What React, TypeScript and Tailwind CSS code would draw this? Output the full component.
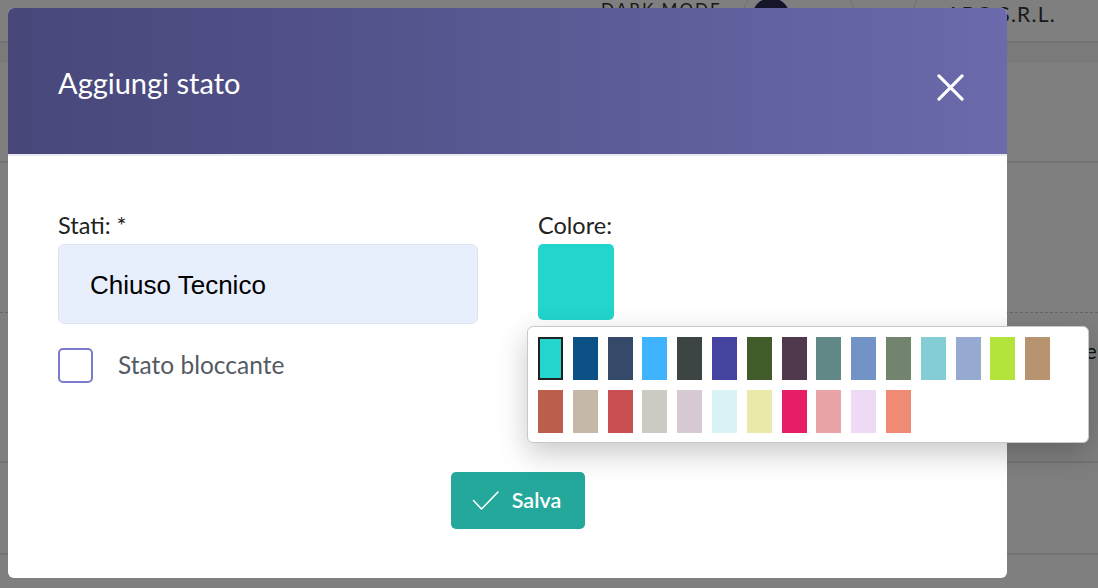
import React from "react";

const row1 = [
  "#23d5cd", "#0b5185", "#354969", "#40b3fe", "#3d4444", "#4444a0", "#415b2b", "#50394c",
  "#618786", "#7193c6", "#72846d", "#84cdd5", "#95a9d1", "#b3e43b", "#b7936f",
];
const row2 = [
  "#bb5e4b", "#c5b8a8", "#c84f52", "#cbcbc4", "#d7cad4", "#daf3f5", "#e8e9ab", "#e71d67",
  "#eaa3a7", "#eedaf4", "#ef8a75",
];

function CheckIcon() {
  return (
    <svg width="27" height="19" viewBox="0 0 27 19" fill="none" aria-hidden="true">
      <path d="M1.5 9.5 L9.5 18 L26 1" stroke="#fff" strokeWidth="1.6" strokeLinecap="round" strokeLinejoin="round" />
    </svg>
  );
}

function CloseIcon() {
  return (
    <svg width="27" height="27" viewBox="0 0 28 28" fill="none" aria-hidden="true">
      <path d="M2 2 L26 26 M26 2 L2 26" stroke="#fff" strokeWidth="3.2" strokeLinecap="round" />
    </svg>
  );
}

function Swatch({ color, selected }: { color: string; selected?: boolean }) {
  return (
    <div
      className={selected ? "w-[25px] h-[43px] border-2 border-[#222]" : "w-[25px] h-[43px]"}
      style={{ background: color }}
    />
  );
}

export default function App() {
  const font = { fontFamily: "Lato, 'Noto Sans', sans-serif" };

  return (
    <div className="relative w-[1098px] h-[588px] overflow-hidden bg-white" style={font}>
      {/* ── page behind the modal ── */}
      <div className="flex items-start h-[43px] border-b-2 border-[#e6e6ee] text-[#333]">
        <div className="w-[601px] shrink-0" />
        <span className="w-[141px] shrink-0 text-[17px] leading-[18px] tracking-[0.12em] mt-[1px]">DARK MODE</span>
        <div className="w-[114px] shrink-0 h-[62px] -mt-[14px] rounded-full border border-[#ddd] flex items-center pl-[9px] gap-[14px]">
          <div className="w-[38px] h-[38px] rounded-full bg-[#2a2a55]" />
          <span className="text-[17px] tracking-[0.12em]">OFF</span>
        </div>
        <div className="ml-[57px] h-[70px] -mt-[20px] pl-[32px] rounded-l-full border-l border-[#ddd] flex items-start">
          <span className="mt-[23px] text-[21px] leading-[22px] tracking-[0.06em]">ABC S.R.L.</span>
        </div>
      </div>
      <div className="h-[20px] bg-[#f4f4f6]" />
      <div className="h-[100px] border-b-2 border-[#e6e6ee]" />
      <div className="h-[150px] border-b border-dashed border-[#ccc] flex justify-end items-end">
        <span className="text-[22px] leading-[26px] text-[#222] mr-[1px] mb-[-52px]">se</span>
      </div>
      <div className="h-[150px] border-b-2 border-[#e6e6ee]" />
      <div className="h-[92px] border-b-2 border-[#e6e6ee] flex">
        <div className="w-[601px] border-r-2 border-[#e0e0e8]" />
      </div>

      {/* overlay */}
      <div className="absolute inset-0 bg-black/50" />

      {/* ── modal ── */}
      <div className="absolute left-[8px] top-[8px] w-[999px] h-[570px] rounded-[6px] bg-white">
        <div className="h-[146px] rounded-t-[6px] bg-linear-to-r from-[#47477a] to-[#6a6aac] flex items-center justify-between pl-[50px] pr-[43px] pt-[4px]">
          <h2 className="text-[29px] leading-[36px] text-white font-normal">Aggiungi stato</h2>
          <button className="w-[27px] h-[27px] mt-[8px] flex items-center justify-center">
            <CloseIcon />
          </button>
        </div>
        <div className="h-[2px] bg-[#e9eaf1]" />

        <div className="pt-[55px] pl-[50px] pr-[30px]">
          <div className="flex gap-[60px]">
            <div className="w-[420px] flex flex-col">
              <label className="text-[23.5px] leading-[28px] text-[#222]">Stati: *</label>
              <div className="mt-[5px] h-[80px] rounded-[6px] border border-[#dfe4f1] bg-[#e8effc] flex items-center pl-[31px] pt-[2px]">
                <span className="text-[26px] text-black" style={{ fontFamily: "'Liberation Sans', Arial, sans-serif" }}>
                  Chiuso Tecnico
                </span>
              </div>
              <div className="mt-[23px] flex items-center gap-[25px]">
                <div className="w-[35px] h-[35px] rounded-[5px] border-2 border-[#7b7bcc] bg-white" />
                <span className="text-[24.5px] text-[#555a63]">Stato bloccante</span>
              </div>
            </div>
            <div className="flex flex-col">
              <label className="text-[23.5px] leading-[28px] text-[#222]">Colore:</label>
              <div className="mt-[5px] w-[76px] h-[76px] rounded-[5px] bg-[#23d5cd]" />
            </div>
          </div>

          <div className="flex justify-center mt-[88px]">
            <button className="w-[134px] h-[57px] rounded-[5px] bg-[#24a89b] flex items-center justify-center gap-[13px] text-white pr-[2px]">
              <CheckIcon />
              <span className="text-[21.5px] font-semibold">Salva</span>
            </button>
          </div>
        </div>

        {/* colour picker popover */}
        <div className="absolute left-[519px] top-[318px] w-[562px] h-[117px] rounded-[6px] border border-[#c8c8c8] bg-white shadow-[0_10px_30px_rgba(0,0,0,0.22)] pt-[10px] pl-[10px] flex flex-col gap-[10px]">
          <div className="flex gap-[9.8px]">
            {row1.map((c, i) => (
              <Swatch key={c} color={c} selected={i === 0} />
            ))}
          </div>
          <div className="flex gap-[9.8px]">
            {row2.map((c) => (
              <Swatch key={c} color={c} />
            ))}
          </div>
        </div>
      </div>
    </div>
  );
}
